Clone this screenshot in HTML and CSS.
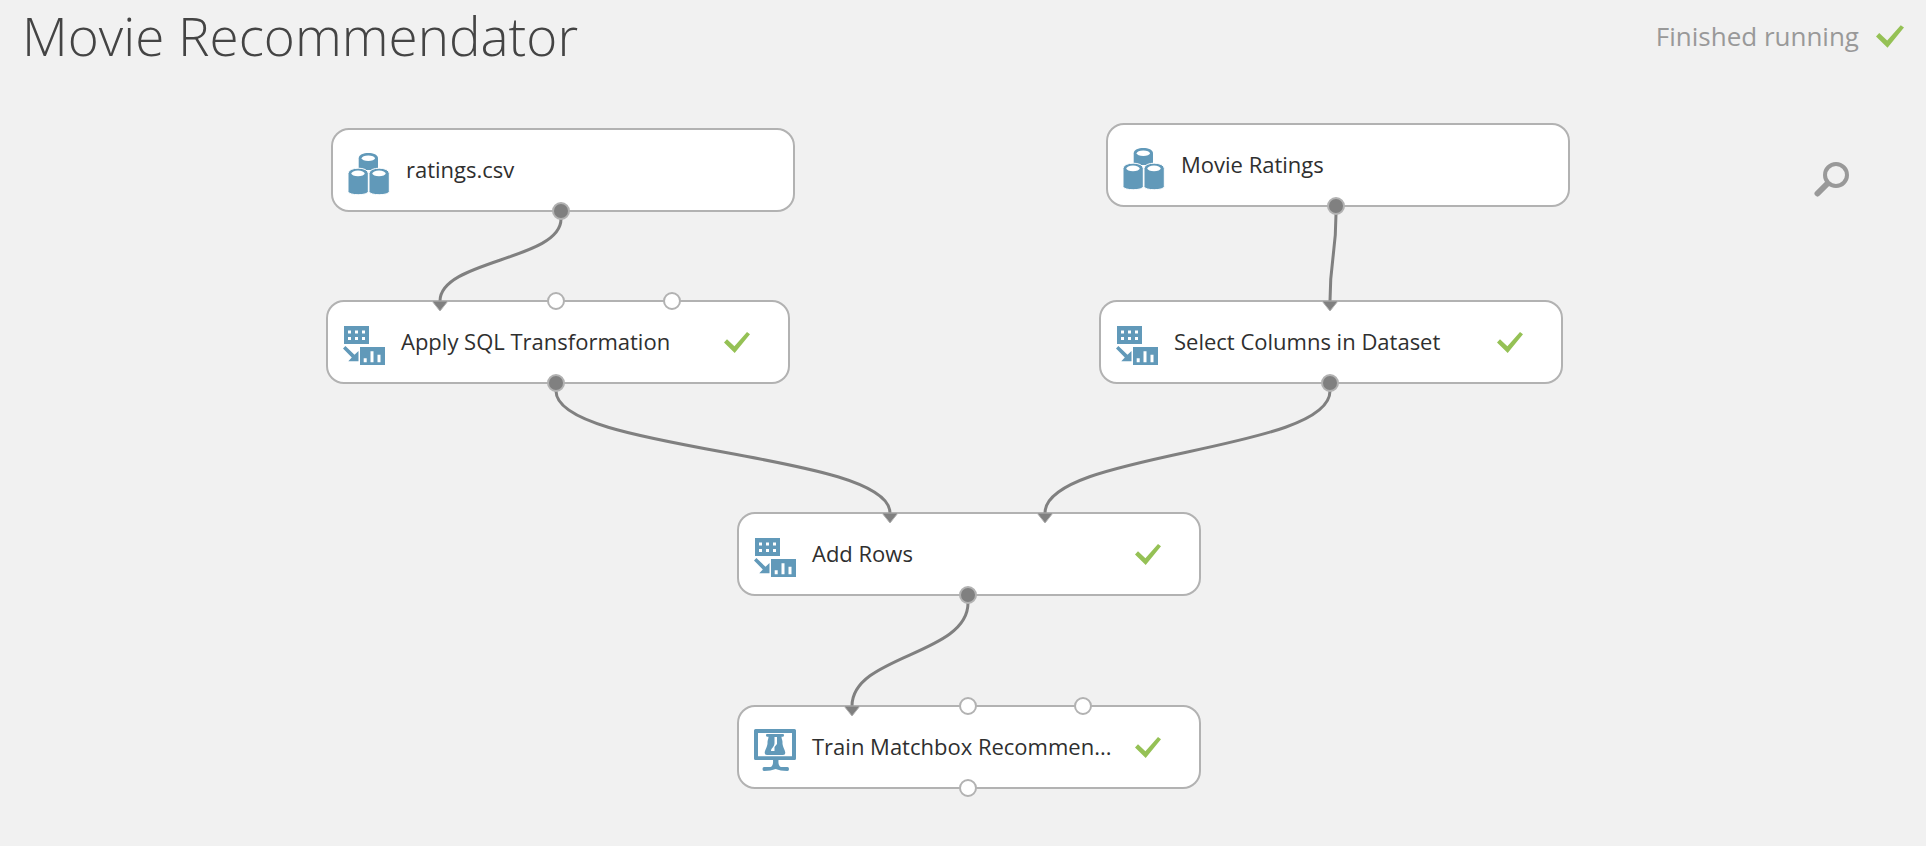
FILE: index.html
```html
<!DOCTYPE html>
<html lang="en">
<head>
<meta charset="utf-8">
<title>Movie Recommendator</title>
<link rel="stylesheet" href="styles.css">
</head>
<body>
<svg class="defs" aria-hidden="true">
  <symbol id="check" viewBox="0 0 26 21"><path d="M0 10.5 3 7.3 10.4 14.3 23 0 26 2.2 10.7 21Z"/></symbol>
  <symbol id="dataset" viewBox="-1 0 42 42">
    <path d="M9.7 5.2C9.7-1.7 29-1.7 29 5.2V17H9.7Z"/>
    <ellipse class="hole" cx="19.3" cy="5.2" rx="6.6" ry="2.8"/>
    <g class="edge">
      <path d="M-1 20.5C-1 13.4 19.3 13.4 19.3 20.5V38.5C19.3 42.8-1 42.8-1 38.5Z"/>
      <path d="M20 20.5C20 13.4 40.3 13.4 40.3 20.5V38.5C40.3 42.8 20 42.8 20 38.5Z"/>
    </g>
    <ellipse class="hole" cx="9" cy="20.4" rx="6.6" ry="2.8"/>
    <ellipse class="hole" cx="30" cy="20.4" rx="6.6" ry="2.8"/>
  </symbol>
  <symbol id="transform" viewBox="0 0 42 42">
    <path d="M1 1H26V19H1Z"/>
    <path class="hole" d="M5 5.5h3v3h-3ZM12 5.5h3v3h-3ZM19 5.5h3v3h-3ZM5 12h3v3h-3ZM12 12h3v3h-3ZM19 12h3v3h-3Z"/>
    <path d="M0 23.5 2.4 21 11.5 29.8 15.5 26V36.3H5.3L8.8 32.6Z"/>
    <path d="M17 22H42V40H17Z"/>
    <path class="hole" d="M20.7 33.3h3v4h-3ZM27.5 26.3h3v11h-3ZM34.5 29.7h3v7.6h-3Z"/>
  </symbol>
  <symbol id="train" viewBox="0 0 42 42">
    <path fill-rule="evenodd" d="M1.5-1H40.5Q42-1 42 .5V28.5Q42 30 40.5 30H1.5Q0 30 0 28.5V.5Q0-1 1.5-1ZM4 3V26.3H38V3Z"/>
    <path d="M19 30H24.5Q24 36 27 37H33.5Q35 37 35 39T33.5 41C28 41 25 40 21.7 39C18 40 15 41 10 41Q8.5 41 8.5 39T10 37H16.5Q19.5 36 19 30Z"/>
    <path d="M13 4H29Q30 4 30 5.3T29 6.7H27.5C27.5 9 28.500 10 28.500 12C28 16 31.3 20 31.3 23Q31.3 25 29 25H13Q10.7 25 10.7 23C10.7 20 14 16 13.5 12C13.5 10 14.5 9 14.5 6.7H13Q12 6.7 12 5.3T13 4Z"/>
    <path class="hole" d="M20.5 7H23V14L20.5 17V21H17C17 18 20.5 17 20.5 13Z"/>
  </symbol>
</svg>

<header class="header">
  <h1 class="title">Movie Recommendator</h1>
  <div class="status" role="status">
    <span>Finished running</span>
    <svg class="status-check" aria-hidden="true"><use href="#check"/></svg>
  </div>
</header>

<main class="canvas">
  <article class="node node-csv">
    <svg class="icon" aria-hidden="true"><use href="#dataset"/></svg>
    <span class="label">ratings.csv</span>
  </article>
  <article class="node node-movies">
    <svg class="icon" aria-hidden="true"><use href="#dataset"/></svg>
    <span class="label">Movie Ratings</span>
  </article>
  <article class="node node-sql">
    <svg class="icon" aria-hidden="true"><use href="#transform"/></svg>
    <span class="label">Apply SQL Transformation</span>
    <svg class="check" aria-hidden="true"><use href="#check"/></svg>
  </article>
  <article class="node node-select">
    <svg class="icon" aria-hidden="true"><use href="#transform"/></svg>
    <span class="label">Select Columns in Dataset</span>
    <svg class="check" aria-hidden="true"><use href="#check"/></svg>
  </article>
  <article class="node node-rows">
    <svg class="icon" aria-hidden="true"><use href="#transform"/></svg>
    <span class="label">Add Rows</span>
    <svg class="check" aria-hidden="true"><use href="#check"/></svg>
  </article>
  <article class="node node-train">
    <svg class="icon" aria-hidden="true"><use href="#train"/></svg>
    <span class="label">Train Matchbox Recommen...</span>
    <svg class="check" aria-hidden="true"><use href="#check"/></svg>
  </article>

  <svg class="wires" aria-hidden="true">
    <g class="wire">
      <path d="M561 139C561 180 440 180 440 221"/>
      <path d="M1336 134C1336 177 1330 177 1330 221"/>
      <path d="M556 311C556 372 890 372 890 433"/>
      <path d="M1330 311C1330 372 1045 372 1045 433"/>
      <path d="M968 523C968 575 852 575 852 626"/>
    </g>
    <g class="arrow">
      <path d="M432 221H448L440 231Z"/>
      <path d="M1322 221H1338L1330 231Z"/>
      <path d="M882 433H898L890 443Z"/>
      <path d="M1037 433H1053L1045 443Z"/>
      <path d="M844 626H860L852 636Z"/>
    </g>
    <g class="port used">
      <circle cx="561" cy="131" r="8"/>
      <circle cx="1336" cy="126" r="8"/>
      <circle cx="556" cy="303" r="8"/>
      <circle cx="1330" cy="303" r="8"/>
      <circle cx="968" cy="515" r="8"/>
    </g>
    <g class="port">
      <circle cx="556" cy="221" r="8"/>
      <circle cx="672" cy="221" r="8"/>
      <circle cx="968" cy="626" r="8"/>
      <circle cx="1083" cy="626" r="8"/>
      <circle cx="968" cy="708" r="8"/>
    </g>
  </svg>

  <button class="search" type="button" aria-label="Search">
    <svg viewBox="0 0 36 36" aria-hidden="true"><circle cx="22" cy="13" r="11"/><path d="M13 22 3.5 31.5"/></svg>
  </button>
</main>
</body>
</html>
```
FILE: styles.css
```css
* { box-sizing: border-box; }

body {
  margin: 0;
  min-height: 100vh;
  display: flex;
  flex-direction: column;
  background: #f1f1f1;
  color: #2f2f2f;
  font-family: "Segoe UI", "Open Sans", "Noto Sans", sans-serif;
}

.defs {
  position: absolute;
  width: 0;
  height: 0;
}

.header {
  display: flex;
  justify-content: space-between;
  align-items: center;
  height: 80px;
  padding: 0 22px 8px;
}

.title {
  margin: 0;
  color: #444;
  font-size: 53px;
  font-weight: 300;
  line-height: 72px;
  white-space: nowrap;
}

.status {
  display: flex;
  align-items: center;
  gap: 17px;
  color: #999;
  font-size: 26px;
  line-height: 36px;
  white-space: nowrap;
}

.status-check {
  width: 28px;
  height: 23px;
  fill: #95c155;
}

.canvas {
  position: relative;
  flex: 1;
  min-height: 766px;
}

.node {
  position: absolute;
  display: flex;
  align-items: center;
  width: 464px;
  height: 84px;
  padding: 0 38px 0 15px;
  border: 2px solid #b2b2b2;
  border-radius: 18px;
  background: #fff;
}

.node-csv { left: 331px; top: 48px; }
.node-movies { left: 1106px; top: 43px; }
.node-sql { left: 326px; top: 220px; }
.node-select { left: 1099px; top: 220px; }
.node-rows { left: 737px; top: 432px; }
.node-train { left: 737px; top: 625px; }

.icon {
  flex: none;
  width: 42px;
  height: 50px;
  padding-top: 8px;
  margin-right: 16px;
  overflow: visible;
  fill: #6199b9;
}

#train { overflow: visible; }
.hole { fill: #fff; }
.edge { stroke: #fff; stroke-width: 1; }

.label {
  flex: 1;
  padding-bottom: 2px;
  font-size: 22px;
  line-height: 32px;
  white-space: nowrap;
}

.check {
  flex: none;
  width: 26px;
  height: 21px;
  fill: #95c155;
}

.wires {
  position: absolute;
  inset: 0;
  width: 100%;
  height: 100%;
  overflow: visible;
  pointer-events: none;
}

.wire { fill: none; stroke: #808080; stroke-width: 3; }
.arrow { fill: #808080; stroke: #b2b2b2; stroke-width: 1; }
.port { fill: #fff; stroke: #b2b2b2; stroke-width: 2; }
.port.used { fill: #808080; }

.search {
  position: absolute;
  top: 82px;
  right: 76px;
  width: 36px;
  height: 36px;
  padding: 0;
  border: 0;
  background: none;
}

.search svg { display: block; }
.search circle { fill: none; stroke: #999; stroke-width: 4; }
.search path { stroke: #999; stroke-width: 6; stroke-linecap: round; }
```
